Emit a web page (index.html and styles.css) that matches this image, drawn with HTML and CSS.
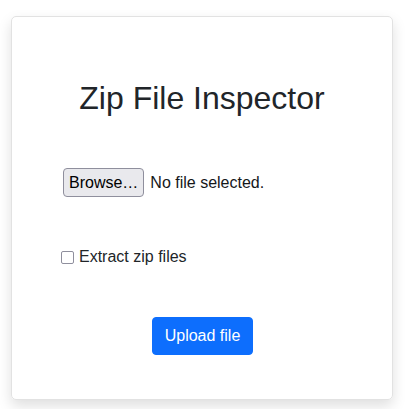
FILE: index.html
```html
<!DOCTYPE html>
<html>
<head>
<meta charset="utf-8">
<link rel="stylesheet" href="styles.css">
</head>
<body>
<div class="card">
  <h1 class="title">Zip File Inspector</h1>
  <div class="file-row">
    <span class="browse">Browse…</span>
    <span class="file-name">No file selected.</span>
  </div>
  <label class="check-row">
    <span class="box"></span>
    <span>Extract zip files</span>
  </label>
  <div class="actions">
    <button class="upload">Upload file</button>
  </div>
</div>
</body>
</html>
```

FILE: styles.css
```css
html, body {
  margin: 0;
  background: #fff;
}
body {
  padding: 16px 12px 10px 11px;
  font-family: "Liberation Sans", Arial, sans-serif;
  font-size: 16px;
  color: #212529;
}
.card {
  height: 384px;
  box-sizing: border-box;
  border: 1px solid #e2e2e2;
  border-radius: 5px;
  box-shadow: 0 6px 14px rgba(0, 0, 0, 0.13);
  padding: 62px 0 0 0;
  display: flex;
  flex-direction: column;
}
.title {
  margin: 0;
  font-size: 32px;
  font-weight: 400;
  line-height: 38px;
  text-align: center;
}
.file-row {
  margin: 51px 0 0 51px;
  display: flex;
  align-items: center;
  gap: 6px;
  height: 29px;
}
.browse {
  box-sizing: border-box;
  height: 29px;
  line-height: 19px;
  padding: 4px 5px;
  border: 1px solid #8f8f9d;
  border-radius: 4px;
  background: #e9e9ed;
  color: #000;
}
.file-name {
  color: #15171a;
}
.check-row {
  margin: 48px 0 0 49px;
  display: flex;
  align-items: center;
  gap: 5px;
  height: 24px;
  line-height: 24px;
}
.box {
  width: 13px;
  height: 13px;
  box-sizing: border-box;
  border: 1px solid #8f8f9d;
  border-radius: 2px;
  background: #fff;
}
.actions {
  margin-top: 48px;
  display: flex;
  justify-content: center;
}
.upload {
  font-family: "Liberation Sans", Arial, sans-serif;
  font-size: 16px;
  line-height: 24px;
  color: #fff;
  background: #0d6efd;
  border: 1px solid #0d6efd;
  border-radius: 4px;
  padding: 6px 12px;
  margin-left: 1px;
}
```
